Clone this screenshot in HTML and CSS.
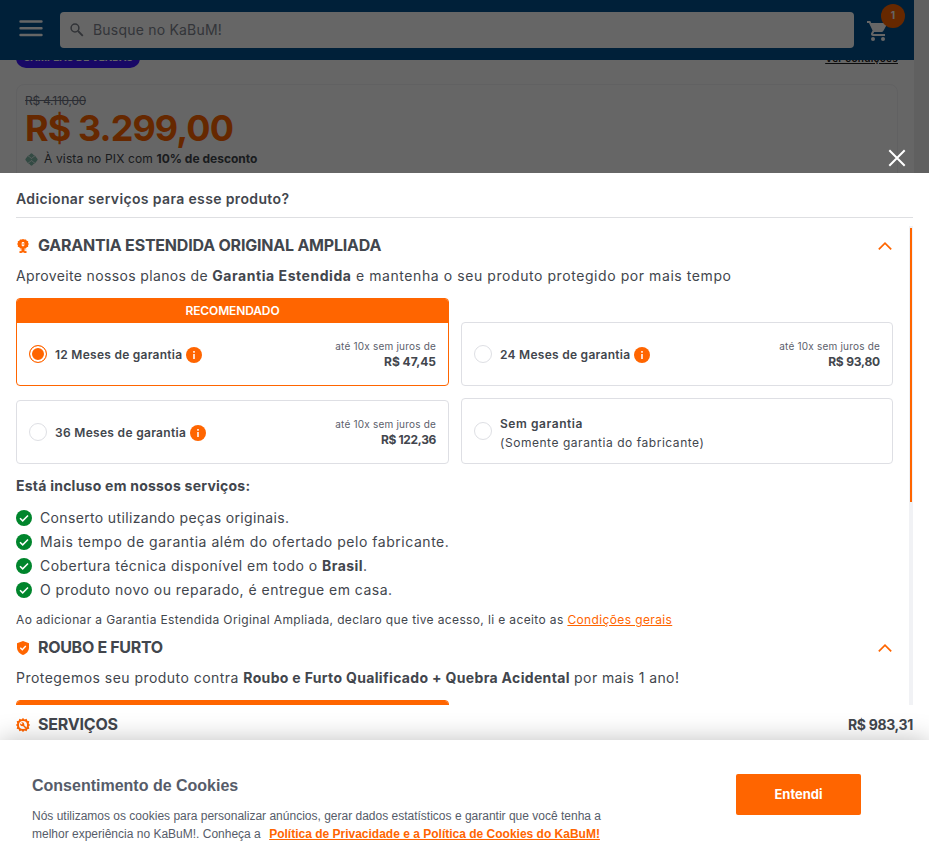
FILE: index.html
```html
<!DOCTYPE html>
<html lang="pt-BR">
<head>
<meta charset="utf-8">
<title>KaBuM! - Serviços</title>
<link rel="stylesheet" href="styles.css">
</head>
<body>
<svg class="defs" width="0" height="0">
  <symbol id="check" viewBox="0 0 16 16"><circle cx="8" cy="8" r="8" fill="#00852c"/><path d="M4 8.2l2.700 2.700 5.300-5.400" fill="none" stroke="#fff" stroke-width="1.500"/></symbol>
  <symbol id="info" viewBox="0 0 16 16"><circle cx="8" cy="8" r="8" fill="#ff6500"/><path d="M7.100 6.900h1.800V12H7.100zM7.100 4h1.800v1.700H7.100z" fill="#ffe9dc"/></symbol>
  <symbol id="chevron" viewBox="0 0 14 8"><path d="M.8 7.300L7 1.200l6.200 6.100" fill="none" stroke="#ff6500" stroke-width="1.700"/></symbol>
</svg>

<div class="page">
  <header class="topbar">
    <svg class="menu" viewBox="0 0 24 17"><path d="M1.500 1.500h21M1.500 8.300h21M1.500 15h21" stroke="#fff" stroke-width="2.400" stroke-linecap="round"/></svg>
    <div class="search">
      <svg viewBox="0 0 14 14"><circle cx="5" cy="5" r="3.900" fill="none" stroke="#7c808a" stroke-width="1.500"/><path d="M8 8l4.800 4.800" stroke="#7c808a" stroke-width="1.800"/></svg>
      <span>Busque no KaBuM!</span>
    </div>
    <div class="cart">
      <svg viewBox="0 0 20 20"><path d="M0 0v2h2l3.600 7.600-1.350 2.450C3.520 13.400 4.480 15 6 15h12v-2H6.420a.25.25 0 0 1-.22-.37L7.100 11h7.450c.75 0 1.410-.41 1.750-1.030l3.580-6.490A1 1 0 0 0 19 2H4.210L3.270 0H0z" fill="#fff"/><circle cx="6" cy="18" r="2" fill="#fff"/><circle cx="16" cy="18" r="2" fill="#fff"/></svg>
      <span class="count">1</span>
    </div>
  </header>
  <main class="product">
    <div class="tags"><span class="tag">CAMPEÃO DE VENDAS</span><a class="cond">Ver condições</a></div>
    <section class="price">
      <s>R$ 4.110,00</s>
      <strong class="now">R$ 3.299,00</strong>
      <p class="pix"><svg viewBox="0 0 14 14"><path d="M6 .9a1.400 1.400 0 0 1 2 0l1.800 1.800h.8L13.100 6a1.400 1.400 0 0 1 0 2l-2.500 3.300h-.8L8 13.100a1.400 1.400 0 0 1-2 0l-1.800-1.800h-.8L.9 8a1.400 1.400 0 0 1 0-2l2.500-3.300h.8z" fill="#7fb8a8"/><path d="M3.600 3.400c1.500 0 2.200 2.400 3.400 2.400s1.900-2.400 3.400-2.400M3.600 10.600c1.500 0 2.200-2.400 3.400-2.400s1.900 2.400 3.400 2.400" fill="none" stroke="#fff" stroke-width=".9"/></svg><span><span class="pixtext">À vista no PIX com </span><b>10% de desconto</b></span></p>
    </section>
  </main>
  <div class="shade"></div>
  <svg class="close" viewBox="0 0 18 18"><path d="M1.300 1.300l15.400 15.400M16.700 1.300L1.300 16.700" stroke="#fff" stroke-width="2"/></svg>
</div>

<div class="sheet">
  <h2 class="title">Adicionar serviços para esse produto?</h2>
  <div class="scroller">
    <div class="services">
      <div class="head">
        <svg viewBox="0 0 14 14"><path d="M7 0l1.400.6 1.600-.2.700 1.300 1.500.6-.1 1.500.7 1.200-.7 1.200.1 1.500-1.500.6-.8 1.200H8.500v1.200h2v3.300H8.700L7 13.300l-1.700.7H3.500v-3.300h2V9.500H4.100l-.8-1.200-1.500-.6.1-1.500L1.200 5l.7-1.200-.1-1.500 1.500-.6L4 .4l1.600.2z" fill="#ff6500"/><path d="M2.500 11.600h3M8.500 11.600h3" stroke="#fff" stroke-width="1"/><rect x="5.700" y="3" width="2.600" height="4.200" rx=".9" fill="#fff"/><path d="M7.100 4v2.200" stroke="#ff6500" stroke-width=".8"/></svg>
        <h3 class="t-garantia">GARANTIA ESTENDIDA ORIGINAL AMPLIADA</h3>
        <svg class="chev"><use href="#chevron"/></svg>
      </div>
      <p class="intro"><span class="i1">Aproveite nossos planos de </span><b class="i2">Garantia Estendida</b><span class="i3"> e mantenha o seu produto protegido por mais tempo</span></p>
      <div class="plans">
        <label class="plan selected">
          <span class="ribbon">RECOMENDADO</span>
          <span class="row"><i class="radio"></i><b class="m12">12 Meses de garantia</b><svg class="info"><use href="#info"/></svg><span class="cost"><small>até 10x sem juros de</small><b>R$ 47,45</b></span></span>
        </label>
        <label class="plan"><span class="row"><i class="radio"></i><b class="m24">24 Meses de garantia</b><svg class="info"><use href="#info"/></svg><span class="cost"><small>até 10x sem juros de</small><b class="mid">R$ 93,80</b></span></span></label>
        <label class="plan"><span class="row"><i class="radio"></i><b>36 Meses de garantia</b><svg class="info"><use href="#info"/></svg><span class="cost"><small>até 10x sem juros de</small><b class="wide">R$ 122,36</b></span></span></label>
        <label class="plan"><span class="row none"><i class="radio"></i><span class="nowarranty"><b>Sem garantia</b><span>(Somente garantia do fabricante)</span></span></span></label>
      </div>
      <h4>Está incluso em nossos serviços:</h4>
      <ul>
        <li><svg><use href="#check"/></svg><span class="l1">Conserto utilizando peças originais.</span></li>
        <li><svg><use href="#check"/></svg><span class="l2">Mais tempo de garantia além do ofertado pelo fabricante.</span></li>
        <li><svg><use href="#check"/></svg><span class="l3">Cobertura técnica disponível em todo o <b>Brasil</b>.</span></li>
        <li><svg><use href="#check"/></svg><span class="l4">O produto novo ou reparado, é entregue em casa.</span></li>
      </ul>
      <p class="terms">Ao adicionar a Garantia Estendida Original Ampliada, declaro que tive acesso, li e aceito as <a>Condições gerais</a></p>
      <div class="head">
        <svg viewBox="0 0 14 14"><path d="M7 0l6 2.200v4.300c0 3.500-2.500 6.400-6 7.500-3.500-1.100-6-4-6-7.500V2.200z" fill="#ff6500"/><path d="M4.300 6.800l2 2 3.500-3.700" fill="none" stroke="#fff" stroke-width="1.400"/></svg>
        <h3 class="t-roubo">ROUBO E FURTO</h3>
        <svg class="chev"><use href="#chevron"/></svg>
      </div>
      <p class="intro"><span class="r1">Protegemos seu produto contra </span><b class="r2">Roubo e Furto Qualificado + Quebra Acidental</b><span class="r3"> por mais 1 ano!</span></p>
      <div class="plans"><div class="plan selected"><span class="ribbon"></span></div></div>
    </div>
    <div class="track"><div class="thumb"></div></div>
  </div>
  <div class="head total">
    <svg viewBox="0 0 14 14"><path d="M7 0l1.600 1.500 2-.7.7 1.900 2 .6-.6 2.100L14 7l-1.300 1.600.6 2.100-2 .6-.7 1.900-2-.7L7 14l-1.600-1.500-2 .7-.7-1.900-2-.6.6-2.100L0 7l1.300-1.600-.6-2.100 2-.6.7-1.900 2 .7z" fill="#ff6500"/><circle cx="7" cy="7" r="4" fill="#fff"/><circle cx="6.200" cy="6.200" r="2" fill="#ff6500"/><path d="M6.500 6.500l3.500 3.500" stroke="#ff6500" stroke-width="1.500"/><path d="M4.400 4.400l1.800 1.800" stroke="#fff" stroke-width="1.100"/></svg>
    <h3 class="t-servicos">SERVIÇOS</h3>
    <strong>R$ 983,31</strong>
  </div>
</div>

<div class="cookies">
  <div class="text">
    <h5>Consentimento de Cookies</h5>
    <p>Nós utilizamos os cookies para personalizar anúncios, gerar dados estatísticos e garantir que você tenha a<br>melhor experiência no KaBuM!. Conheça a <a>Política de Privacidade e a Política de Cookies do KaBuM!</a></p>
  </div>
  <button>Entendi</button>
</div>
</body>
</html>
```
FILE: styles.css
```css
* { box-sizing: border-box; margin: 0; padding: 0; }
body { width: 929px; height: 865px; overflow: hidden; background: #fff; color: #42464d; font-family: Inter, sans-serif; font-size: 14px; }
.defs { position: absolute; }
svg { display: block; flex: none; }

.page { position: relative; height: 173px; overflow: hidden; background: #f0f0f0; }
.topbar { width: 914px; height: 60px; background: #00518f; display: flex; align-items: center; padding-left: 19px; }
.menu { width: 24px; height: 17px; margin: -4px 17px 0 0; }
.search { width: 794px; height: 36px; background: #fff; border-radius: 4px; display: flex; align-items: center; gap: 9px; padding: 0 0 1px 10px; color: #7f8590; letter-spacing: .2px; }
.search svg { width: 14px; height: 14px; }
.cart { position: relative; margin-left: 13px; }
.cart svg { width: 20px; height: 20px; margin-top: 2px; }
.count { position: absolute; left: 14px; top: -15px; width: 24px; height: 24px; border-radius: 50%; background: #ff6500; color: #fff; font-size: 10px; font-weight: 700; line-height: 23px; text-align: center; }
.product { width: 914px; height: 113px; background: #fff; padding: 0 16px; overflow: hidden; }
.tags { display: flex; justify-content: space-between; margin-top: -12px; height: 20px; }
.tag { width: 124px; border-radius: 10px; background: #3c14ff; color: #fff; font-size: 10px; font-weight: 700; line-height: 19px; text-align: center; letter-spacing: -.1px; }
.cond { font-size: 10px; font-weight: 600; line-height: 20px; text-decoration: underline; color: #222; letter-spacing: .27px; }
.price { height: 120px; margin-top: 16px; border: 1px solid #f3f3f5; border-radius: 8px; padding: 8px; }
.price s { display: block; font-size: 12px; line-height: 16px; letter-spacing: -.26px; color: #6d7280; }
.now { display: block; font-size: 36px; line-height: 38px; letter-spacing: -.92px; color: #ff6500; }
.pix { display: flex; align-items: center; gap: 6px; font-size: 12px; line-height: 18px; margin-top: 3px; white-space: pre; }
.pix svg { width: 13px; height: 13px; }
.pixtext { letter-spacing: .143px; }
.pix b { letter-spacing: .01px; }
.shade { position: absolute; inset: 0; background: rgba(0, 0, 0, .6); }
.close { position: absolute; left: 888px; top: 149px; width: 18px; height: 18px; }

.sheet { height: 567px; padding: 0 16px; background: #fff; }
.title { height: 45px; padding-top: 15px; font-size: 14px; font-weight: 600; line-height: 22px; letter-spacing: .36px; border-bottom: 1px solid #dedfe2; }
.scroller { display: flex; justify-content: space-between; height: 479px; margin-top: 8px; overflow: hidden; }
.services { width: 877px; }
.track { width: 4px; height: 479px; background: #f1f2f5; padding: 2px 1px; }
.thumb { height: 274px; background: #ff6500; }
.head { display: flex; align-items: center; height: 24px; margin-top: 7px; }
.head > svg:first-child { width: 14px; height: 14px; margin: 1px 8px 0 0; }
.head h3 { font-size: 16px; font-weight: 700; line-height: 24px; }
.head .chev { width: 14px; height: 8px; margin: 2px 1px 0 auto; }
.t-garantia { letter-spacing: -.21px; }
.t-roubo { letter-spacing: -.31px; }
.t-servicos { letter-spacing: -.2px; }
.intro { line-height: 22px; margin: 8px 0 11px; white-space: pre; }
.i1 { letter-spacing: .353px; }
.i2 { letter-spacing: .55px; }
.i3 { letter-spacing: .571px; }
.r1 { letter-spacing: .462px; }
.r2 { letter-spacing: .335px; }
.r3 { letter-spacing: .4px; }
.plans { display: grid; grid-template-columns: 433px 432px; gap: 12px; align-items: end; font-size: 12px; }
.plan { display: block; border: 1px solid #dedfe4; border-radius: 4px; overflow: hidden; }
.selected { border-color: #ff6500; }
.ribbon { display: block; height: 24px; background: #ff6500; color: #fff; font-weight: 600; line-height: 24px; text-align: center; letter-spacing: -.13px; }
.row { display: flex; align-items: center; height: 62px; padding: 0 12px; }
.row b { font-weight: 600; letter-spacing: .31px; }
.row .m12 { letter-spacing: .26px; }
.row .m24 { letter-spacing: .27px; }
.none { height: 64px; }
.radio { width: 18px; height: 18px; border: 1px solid #dedfe4; border-radius: 50%; margin-right: 8px; }
.selected .radio { border-color: #ff6500; background: #ff6500; box-shadow: inset 0 0 0 2px #fff; }
.info { width: 16px; height: 16px; margin: 2px 0 0 4px; }
.cost { display: flex; flex-direction: column; align-items: flex-end; margin-left: auto; line-height: 15px; }
.cost small { font-size: 10px; letter-spacing: .2px; color: #5b606b; }
.row .cost b { font-weight: 700; letter-spacing: 0; }
.row .cost .mid { letter-spacing: -.2px; }
.row .cost .wide { letter-spacing: -.35px; }
.nowarranty { line-height: 19px; letter-spacing: .54px; margin-top: 4px; }
.nowarranty b, .nowarranty span { display: block; }
.nowarranty b { letter-spacing: .56px; }
h4 { font-size: 14px; font-weight: 700; line-height: 22px; letter-spacing: .236px; margin: 11px 0 9px; }
ul { list-style: none; }
li { display: flex; align-items: center; gap: 8px; height: 24px; }
li svg { width: 16px; height: 16px; }
li span { line-height: 20px; }
.l1 { letter-spacing: .35px; }
.l2 { letter-spacing: .53px; }
.l3 { letter-spacing: .449px; }
.l4 { letter-spacing: .48px; }
.terms { font-size: 12px; line-height: 18px; letter-spacing: .37px; margin-top: 9px; }
.terms a { color: #ff6500; text-decoration: underline; }
.terms + .head { margin-top: 6px; }
.total { margin-top: 7px; }
.total strong { margin-left: auto; letter-spacing: -.34px; }

.cookies { position: relative; display: flex; align-items: flex-start; height: 125px; padding: 34px 68px 0 32px; background: #fff; box-shadow: 0 0 24px rgba(0, 0, 0, .25); font-family: "Liberation Sans", sans-serif; color: #565c69; }
.text { flex: 1; }
h5 { font-size: 16px; line-height: 22px; padding-top: 1px; }
.cookies p { font-size: 12px; line-height: 18px; margin-top: 10px; }
.cookies p a { margin-left: 5px; font-weight: 700; color: #ff6500; text-decoration: underline; }
button { width: 125px; height: 41px; border: 0; border-radius: 2px; background: #ff6500; color: #fff; font: 700 13px Inter, sans-serif; padding-bottom: 1px; }
```
